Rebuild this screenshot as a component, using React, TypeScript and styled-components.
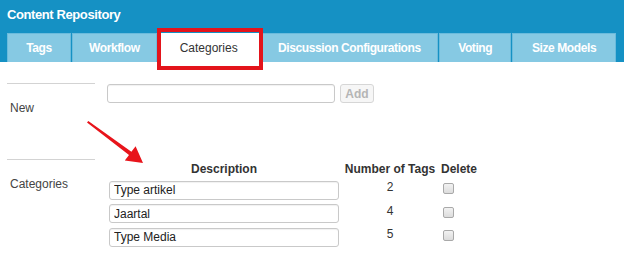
import styled, { createGlobalStyle } from 'styled-components';

const GlobalStyle = createGlobalStyle`
  html, body {
    margin: 0;
    padding: 0;
    background: #fff;
  }
  body {
    font-family: 'Liberation Sans', Arial, sans-serif;
    color: #333;
  }
`;

const Page = styled.div`
  position: relative;
  width: 624px;
  height: 268px;
  overflow: hidden;
`;

const Header = styled.header`
  background-color: #1591c4;
  padding: 7px 7px 0;
  height: 62px;
  box-sizing: border-box;
`;

const Title = styled.h1`
  margin: 0;
  font-size: 13px;
  line-height: 15px;
  font-weight: 700;
  letter-spacing: -0.4px;
  color: #fff;
`;

const TabBar = styled.nav`
  display: flex;
  margin-top: 11px;
`;

const Tab = styled.div<{ $width: number; $active?: boolean }>`
  width: ${p => p.$width}px;
  height: 29px;
  box-sizing: border-box;
  display: flex;
  align-items: center;
  justify-content: center;
  margin-right: 1px;
  background-color: ${p => (p.$active ? '#fff' : '#86c9e3')};
  border: 1px solid ${p => (p.$active ? '#fff' : '#6bbbdc')};
  border-bottom: none;
  color: ${p => (p.$active ? '#333' : '#fff')};
  font-size: 12px;
  font-weight: ${p => (p.$active ? 400 : 700)};
  letter-spacing: ${p => (p.$active ? '0' : '-0.4px')};
  white-space: nowrap;
`;

const Main = styled.main`
  display: grid;
  grid-template-columns: 88px 1fr;
  grid-template-rows: 76px auto;
  column-gap: 12px;
  padding: 21px 7px 0;
`;

const Label = styled.div`
  border-top: 1px solid #d3d3d3;
  padding: 17px 0 0 3px;
  font-size: 12px;
  line-height: 14px;
  color: #444;
`;

const NewRow = styled.div`
  display: flex;
  align-items: flex-start;
  gap: 5px;
  padding-top: 1px;
`;

const TextInput = styled.input<{ $width: number }>`
  width: ${p => p.$width}px;
  height: 19px;
  box-sizing: border-box;
  border: 1px solid #c9c9c9;
  border-radius: 3px;
  padding: 0 4px;
  margin: 0;
  font-family: 'Liberation Sans', Arial, sans-serif;
  font-size: 12px;
  color: #222;
  background: #fff;
  box-shadow: inset 0 1px 1px rgba(0, 0, 0, 0.06);
  outline: none;
`;

const AddButton = styled.button`
  width: 34px;
  height: 19px;
  box-sizing: border-box;
  border: 1px solid #d6d6d6;
  border-radius: 3px;
  background: #f6f6f6;
  color: #b5b5b5;
  font-family: 'Liberation Sans', Arial, sans-serif;
  font-size: 12px;
  font-weight: 700;
  padding: 0;
  margin: 0;
`;

const CategoryTable = styled.div`
  display: grid;
  grid-template-columns: 234px 98px 40px;
  row-gap: 4px;
  padding-top: 3px;
  align-items: start;
`;

const HeadCell = styled.div`
  font-size: 12px;
  line-height: 14px;
  font-weight: 700;
  color: #333;
  text-align: center;
  white-space: nowrap;
`;

const InputCell = styled.div`
  padding-left: 2px;
`;

const CountCell = styled.div`
  font-size: 12px;
  line-height: 14px;
  color: #333;
  text-align: center;
`;

const DeleteCell = styled.div`
  padding: 3px 0 0 4px;
`;

const CheckBox = styled.span`
  display: block;
  width: 11px;
  height: 11px;
  box-sizing: border-box;
  border: 1px solid #a9a9a9;
  border-radius: 2px;
  background: linear-gradient(#f2f2f2, #dcdcdc);
`;

const Annotation = styled.svg`
  position: absolute;
  left: 0;
  top: 0;
  pointer-events: none;
`;

const tabs = [
  { name: 'Tags', width: 64 },
  { name: 'Workflow', width: 85 },
  { name: 'Categories', width: 102, active: true },
  { name: 'Discussion Configurations', width: 178 },
  { name: 'Voting', width: 72 },
  { name: 'Size Models', width: 104 },
];

const categories = [
  { description: 'Type artikel', tags: 2 },
  { description: 'Jaartal', tags: 4 },
  { description: 'Type Media', tags: 5 },
];

const App: React.FC = () => {
  return (
    <Page>
      <GlobalStyle />
      <Header>
        <Title>Content Repository</Title>
        <TabBar>
          {tabs.map(tab => (
            <Tab key={tab.name} $width={tab.width} $active={tab.active}>
              {tab.name}
            </Tab>
          ))}
        </TabBar>
      </Header>

      <Main>
        <Label>New</Label>
        <NewRow>
          <TextInput $width={228} defaultValue="" />
          <AddButton disabled>Add</AddButton>
        </NewRow>

        <Label>Categories</Label>
        <CategoryTable>
          <HeadCell>Description</HeadCell>
          <HeadCell>Number of Tags</HeadCell>
          <HeadCell>Delete</HeadCell>
          {categories.map(cat => [
            <InputCell key={cat.description + '-d'}>
              <TextInput $width={230} defaultValue={cat.description} />
            </InputCell>,
            <CountCell key={cat.description + '-c'}>{cat.tags}</CountCell>,
            <DeleteCell key={cat.description + '-x'}>
              <CheckBox />
            </DeleteCell>,
          ])}
        </CategoryTable>
      </Main>

      <Annotation width="624" height="268" viewBox="0 0 624 268">
        <rect x="159" y="30" width="102" height="38" fill="none" stroke="#e3141b" strokeWidth="4" />
        <polygon
          points="87,122.5 129,155 124.8,160.6 143,163 135.6,146.2 131.4,151.8 88.3,120.9"
          fill="#e8141b"
        />
      </Annotation>
    </Page>
  );
};

export default App;
